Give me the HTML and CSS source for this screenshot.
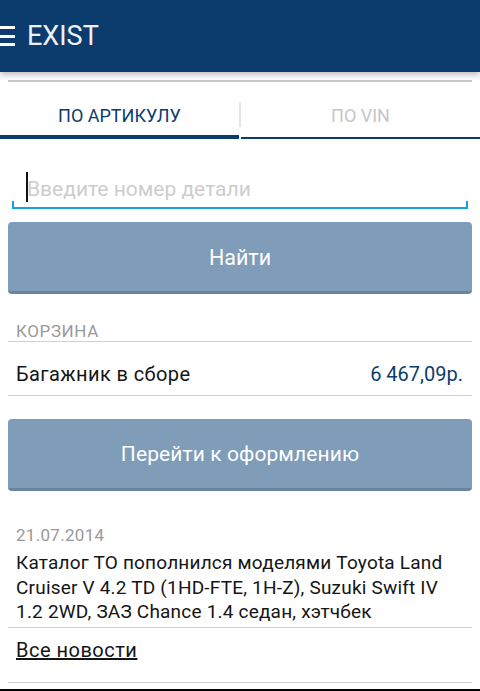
FILE: index.html
```html
<!DOCTYPE html>
<html lang="ru">
<head>
    <meta charset="UTF-8">
    <meta name="viewport" content="width=device-width, initial-scale=1.0">
    <title>EXIST</title>
    <link rel="stylesheet" href="styles.css">
</head>
<body>

    <header class="topbar">
        <svg class="menu-icon" width="15" height="21" viewBox="0 0 15 21">
            <rect x="0" y="0" width="15" height="3" fill="#ffffff"/>
            <rect x="0" y="9" width="15" height="3" fill="#ffffff"/>
            <rect x="0" y="17" width="15" height="3" fill="#ffffff"/>
        </svg>
        <span class="logo">EXIST</span>
    </header>

    <div class="top-rule"></div>

    <nav class="tabs">
        <div class="tab active">ПО АРТИКУЛУ</div>
        <span class="tab-sep"></span>
        <div class="tab">ПО VIN</div>
    </nav>

    <div class="search-field">
        <span class="caret"></span>
        <input type="text" placeholder="Введите номер детали" readonly>
    </div>

    <button class="big-btn btn-search">Найти</button>

    <section class="cart">
        <div class="section-title">КОРЗИНА</div>
        <div class="cart-row">
            <span class="cart-name">Багажник в сборе</span>
            <span class="cart-price">6 467,09р.</span>
        </div>
    </section>

    <button class="big-btn btn-checkout">Перейти к оформлению</button>

    <section class="news">
        <div class="news-item">
            <div class="news-date">21.07.2014</div>
            <p class="news-text">Каталог ТО пополнился моделями Toyota Land Cruiser V 4.2 TD (1HD-FTE, 1H-Z), Suzuki Swift IV 1.2 2WD, ЗАЗ Chance 1.4 седан, хэтчбек</p>
        </div>
        <div class="news-more">
            <a href="#">Все новости</a>
        </div>
    </section>

    <div class="bottom-edge"></div>

</body>
</html>
```

FILE: styles.css
```css
body {
    font-family: Roboto, "Liberation Sans", sans-serif;
    background-color: #ffffff;
    color: #151515;
    margin: 0;
}

.topbar {
    height: 72px;
    background-color: #0b3c6d;
    display: flex;
    align-items: center;
    box-shadow: 0 3px 6px rgba(0, 0, 0, 0.25);
    position: relative;
}
.menu-icon {
    display: block;
    margin-top: 1px;
}
.logo {
    color: #eef1f5;
    font-size: 27px;
    margin-left: 12px;
}

.top-rule {
    height: 2px;
    background: #c9c9c9;
    margin: 8px 8px 0;
}

.tabs {
    display: flex;
    height: 57px;
}
.tab {
    flex: 1;
    text-align: center;
    font-size: 18px;
    line-height: 20px;
    padding-top: 24px;
    color: #c6c6c6;
    border-bottom: 2px solid #0b3c6d;
    box-sizing: border-box;
}
.tab.active {
    color: #0b3c6d;
    border-bottom: 4px solid #0b3c6d;
}
.tab-sep {
    width: 2px;
    background: #e4e4e4;
    margin: 20px 0 12px;
}

.search-field {
    position: relative;
    margin: 32px 12px 0;
    border-bottom: 2px solid #14a2d8;
}
.search-field::before,
.search-field::after {
    content: "";
    position: absolute;
    bottom: -2px;
    width: 2px;
    height: 8px;
    background: #14a2d8;
}
.search-field::before { left: 0; }
.search-field::after { right: 0; }
.search-field input {
    display: block;
    width: 100%;
    box-sizing: border-box;
    height: 36px;
    border: none;
    outline: none;
    padding: 0 0 0 15px;
    font-family: inherit;
    font-size: 21px;
    background: transparent;
}
.search-field input::placeholder {
    color: #cdcdcd;
}
.caret {
    position: absolute;
    left: 14px;
    top: 1px;
    width: 1.5px;
    height: 30px;
    background: #111;
}

.big-btn {
    display: block;
    width: 464px;
    height: 72px;
    margin: 13px 8px 0;
    background-color: #7f9cb8;
    border: none;
    border-bottom: 3px solid #6b849d;
    border-radius: 4px;
    color: #ffffff;
    font-family: inherit;
    font-size: 21.5px;
    padding: 0;
    cursor: pointer;
}
.btn-search {
    padding-top: 2px;
}
.btn-checkout {
    margin-top: 23px;
    font-size: 21px;
    letter-spacing: 0.1px;
}

.cart {
    margin: 27px 8px 0;
}
.section-title {
    font-size: 17px;
    line-height: 20px;
    letter-spacing: 0.6px;
    color: #9a9a9a;
    padding-left: 8px;
    border-bottom: 1px solid #d0d0d0;
}
.cart-row {
    display: flex;
    justify-content: space-between;
    font-size: 20px;
    line-height: 20px;
    padding: 22px 9px 11px 8px;
    border-bottom: 1px solid #d0d0d0;
}
.cart-name {
    letter-spacing: 0.4px;
}
.cart-price {
    color: #0b3c6d;
}

.news {
    margin: 34px 8px 0;
}
.news-item {
    padding: 0 8px 2px;
    border-bottom: 1px solid #d0d0d0;
}
.news-date {
    font-size: 17px;
    line-height: 20px;
    letter-spacing: 0.3px;
    color: #999999;
}
.news-text {
    margin: 6px 0 0;
    font-size: 19px;
    line-height: 24.5px;
    letter-spacing: 0.2px;
}
.news-more {
    padding: 10px 8px 20px;
    font-size: 20px;
    line-height: 24px;
    letter-spacing: 0.5px;
    border-bottom: 1px solid #d0d0d0;
}
.news-more a {
    color: #151515;
    text-decoration-thickness: 1.5px;
}

.bottom-edge {
    height: 2px;
    background: #000;
    margin-top: 6px;
}
```
